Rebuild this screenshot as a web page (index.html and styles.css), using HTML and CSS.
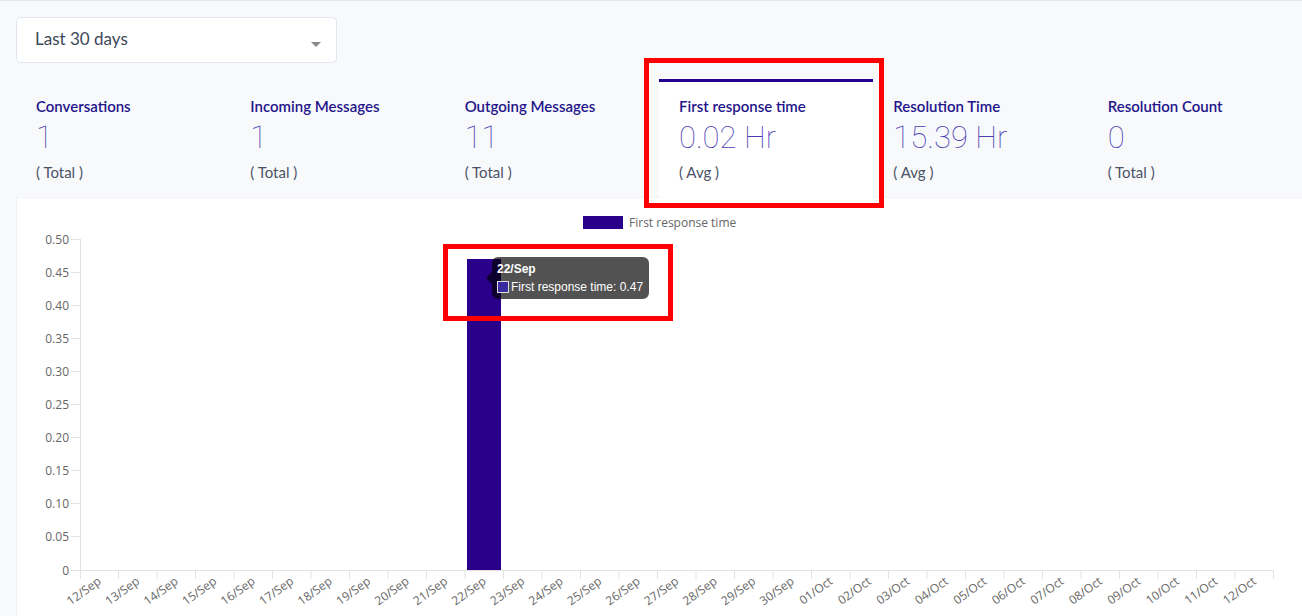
FILE: index.html
```html
<!DOCTYPE html>
<html>
<head>
<meta charset="utf-8">
<link rel="stylesheet" href="styles.css">
</head>
<body>
<div class="page">
  <div class="select">
    <span class="select-text">Last 30 days</span>
    <span class="select-arrow"></span>
  </div>

  <div class="metrics">
    <div class="metric">
      <div class="metric-label">Conversations</div>
      <div class="metric-value">1</div>
      <div class="metric-sub">( Total )</div>
    </div>
    <div class="metric">
      <div class="metric-label">Incoming Messages</div>
      <div class="metric-value">1</div>
      <div class="metric-sub">( Total )</div>
    </div>
    <div class="metric">
      <div class="metric-label">Outgoing Messages</div>
      <div class="metric-value">11</div>
      <div class="metric-sub">( Total )</div>
    </div>
    <div class="metric active">
      <div class="metric-label">First response time</div>
      <div class="metric-value">0.02 Hr</div>
      <div class="metric-sub">( Avg )</div>
    </div>
    <div class="metric">
      <div class="metric-label">Resolution Time</div>
      <div class="metric-value">15.39 Hr</div>
      <div class="metric-sub">( Avg )</div>
    </div>
    <div class="metric">
      <div class="metric-label">Resolution Count</div>
      <div class="metric-value">0</div>
      <div class="metric-sub">( Total )</div>
    </div>
  </div>

  <div class="chart-card">
    <svg class="chart" width="1286" height="440" viewBox="16 199 1286 440" xmlns="http://www.w3.org/2000/svg">
      <!-- legend -->
      <rect x="583" y="217" width="40" height="13" fill="#2a008a"/>
      <text class="legend-text" x="629" y="227.5">First response time</text>

      <!-- axes -->
      <line x1="80.5" y1="240" x2="80.5" y2="580" stroke="#e3e3e3" stroke-width="1"/>
      <line x1="71" y1="571.5" x2="1273.5" y2="571.5" stroke="#e3e3e3" stroke-width="1"/>
      <path d="M71 240.5H80M71 273.5H80M71 306.5H80M71 339.5H80M71 372.5H80M71 405.5H80M71 438.5H80M71 471.5H80M71 504.5H80M71 537.5H80" stroke="#e3e3e3" stroke-width="1"/>
      <path d="M118.5 571V580M157 571V580M195.5 571V580M234 571V580M272.5 571V580M311 571V580M349.5 571V580M388 571V580M426.5 571V580M465 571V580M503.5 571V580M542 571V580M580.5 571V580M619 571V580M657.5 571V580M696 571V580M734.5 571V580M773 571V580M811.5 571V580M850 571V580M888.5 571V580M927 571V580M965.5 571V580M1004 571V580M1042.5 571V580M1081 571V580M1119.5 571V580M1158 571V580M1196.5 571V580M1235 571V580M1273.5 571V580" stroke="#e3e3e3" stroke-width="1"/>

      <!-- y labels -->
      <g class="tick" text-anchor="end">
        <text x="69" y="244.5">0.50</text>
        <text x="69" y="277.5">0.45</text>
        <text x="69" y="310.5">0.40</text>
        <text x="69" y="343.5">0.35</text>
        <text x="69" y="376.5">0.30</text>
        <text x="69" y="409.5">0.25</text>
        <text x="69" y="442.5">0.20</text>
        <text x="69" y="475.5">0.15</text>
        <text x="69" y="508.5">0.10</text>
        <text x="69" y="541.5">0.05</text>
        <text x="69" y="575.5">0</text>
      </g>

      <!-- bar -->
      <rect x="467" y="260" width="34" height="311" fill="#2a008a"/>

      <!-- x labels -->
      <g class="tick" text-anchor="end">
        <text transform="translate(102 584) rotate(-36)">12/Sep</text>
        <text transform="translate(140.5 584) rotate(-36)">13/Sep</text>
        <text transform="translate(179 584) rotate(-36)">14/Sep</text>
        <text transform="translate(217.5 584) rotate(-36)">15/Sep</text>
        <text transform="translate(256 584) rotate(-36)">16/Sep</text>
        <text transform="translate(294.5 584) rotate(-36)">17/Sep</text>
        <text transform="translate(333 584) rotate(-36)">18/Sep</text>
        <text transform="translate(371.5 584) rotate(-36)">19/Sep</text>
        <text transform="translate(410 584) rotate(-36)">20/Sep</text>
        <text transform="translate(448.5 584) rotate(-36)">21/Sep</text>
        <text transform="translate(487 584) rotate(-36)">22/Sep</text>
        <text transform="translate(525.5 584) rotate(-36)">23/Sep</text>
        <text transform="translate(564 584) rotate(-36)">24/Sep</text>
        <text transform="translate(602.5 584) rotate(-36)">25/Sep</text>
        <text transform="translate(641 584) rotate(-36)">26/Sep</text>
        <text transform="translate(679.5 584) rotate(-36)">27/Sep</text>
        <text transform="translate(718 584) rotate(-36)">28/Sep</text>
        <text transform="translate(756.5 584) rotate(-36)">29/Sep</text>
        <text transform="translate(795 584) rotate(-36)">30/Sep</text>
        <text transform="translate(833.5 584) rotate(-36)">01/Oct</text>
        <text transform="translate(872 584) rotate(-36)">02/Oct</text>
        <text transform="translate(910.5 584) rotate(-36)">03/Oct</text>
        <text transform="translate(949 584) rotate(-36)">04/Oct</text>
        <text transform="translate(987.5 584) rotate(-36)">05/Oct</text>
        <text transform="translate(1026 584) rotate(-36)">06/Oct</text>
        <text transform="translate(1064.5 584) rotate(-36)">07/Oct</text>
        <text transform="translate(1103 584) rotate(-36)">08/Oct</text>
        <text transform="translate(1141.5 584) rotate(-36)">09/Oct</text>
        <text transform="translate(1180 584) rotate(-36)">10/Oct</text>
        <text transform="translate(1218.5 584) rotate(-36)">11/Oct</text>
        <text transform="translate(1257 584) rotate(-36)">12/Oct</text>
      </g>

      <!-- tooltip -->
      <g class="tooltip">
        <path d="M498 258H643A6 6 0 0 1 649 264V294A6 6 0 0 1 643 300H498A6 6 0 0 1 492 294V285L486 279L492 273V264A6 6 0 0 1 498 258Z" fill="rgba(0,0,0,0.68)"/>
        <text class="tt-title" x="497" y="274">22/Sep</text>
        <rect x="497.5" y="282.5" width="11" height="11" fill="#3a2aa0" stroke="#ddd" stroke-width="1"/>
        <text class="tt-body" x="511" y="292">First response time: 0.47</text>
      </g>
    </svg>
  </div>

  <div class="mark mark-card"></div>
  <div class="mark mark-tip"></div>
</div>
</body>
</html>
```

FILE: styles.css
```css
html, body {
  margin: 0;
  padding: 0;
}

body {
  background: #f8f9fb;
  border-top: 1px solid #e0e6ed;
  font-family: "Lato", "Noto Sans", sans-serif;
  overflow: hidden;
  height: 615px;
}

.page {
  position: relative;
  padding: 16px 0 0 16px;
}

.select {
  box-sizing: border-box;
  width: 321px;
  height: 46px;
  background: #fff;
  border: 1px solid #e0e6ed;
  border-radius: 5px;
  display: flex;
  align-items: center;
  justify-content: space-between;
  padding: 0 15px 0 18px;
}

.select-text {
  font-size: 17px;
  color: #3c4858;
  margin-top: -3px;
}

.select-arrow {
  width: 0;
  height: 0;
  border-left: 5px solid transparent;
  border-right: 5px solid transparent;
  border-top: 5px solid #8a8a8a;
  margin-top: 8px;
}

.metrics {
  margin-top: 16px;
  display: grid;
  grid-template-columns: repeat(6, 1fr);
}

.metric {
  border-top: 3px solid transparent;
  padding: 15px 20px 17px 20px;
}

.metric.active {
  background: #fff;
  border-top-color: #230090;
}

.metric-label {
  font-size: 15px;
  line-height: 18px;
  font-weight: 600;
  color: #23158a;
  white-space: nowrap;
}

.metric-value {
  font-family: "Roboto", sans-serif;
  font-weight: 100;
  font-size: 31px;
  line-height: 36px;
  margin-top: 5px;
  color: #4a3eb2;
  white-space: nowrap;
}

.metric-sub {
  font-size: 15px;
  line-height: 18px;
  margin-top: 7px;
  color: #4a5266;
}

.chart-card {
  background: #fff;
  border-left: 1px solid #edf0f4;
  border-top: 1px solid #f0f2f5;
  margin-top: -1px;
  height: 440px;
  overflow: hidden;
}

.chart {
  display: block;
  margin-left: -1px;
}

.tick text, .tick {
  font-family: "Open Sans", "Noto Sans", sans-serif;
  font-size: 12px;
  fill: #666;
}

.legend-text {
  font-family: "Open Sans", "Noto Sans", sans-serif;
  font-size: 12px;
  fill: #666;
}

.tt-title {
  font-family: "Liberation Sans", Arial, sans-serif;
  font-size: 12px;
  font-weight: bold;
  fill: #fff;
}

.tt-body {
  font-family: "Liberation Sans", Arial, sans-serif;
  font-size: 12px;
  fill: #fff;
}

.mark {
  position: absolute;
  box-sizing: border-box;
  border: 5px solid #ff0000;
  pointer-events: none;
}

.mark-card {
  left: 644px;
  top: 57px;
  width: 240px;
  height: 150px;
}

.mark-tip {
  left: 443px;
  top: 243px;
  width: 230px;
  height: 77px;
}
```
